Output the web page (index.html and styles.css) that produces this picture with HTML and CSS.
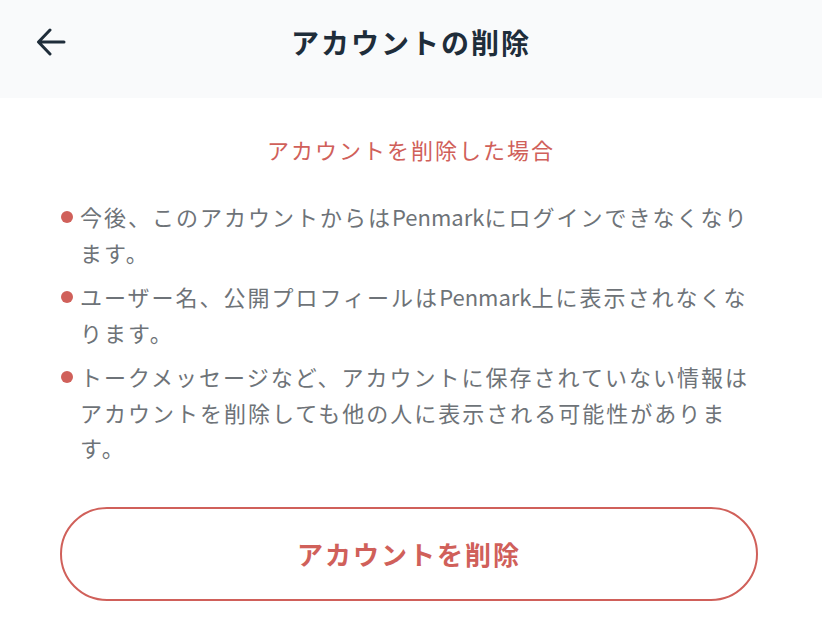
FILE: index.html
```html
<!DOCTYPE html>
<html lang="ja">
<head>
<meta charset="utf-8">
<link rel="stylesheet" href="styles.css">
</head>
<body>
<header class="header">
  <button class="back" aria-label="戻る">
    <svg width="30" height="28" viewBox="0 0 30 28"><path d="M28 14H3M14 2L2.5 14L14 26" fill="none" stroke="#1f2d3a" stroke-width="3" stroke-linecap="round" stroke-linejoin="round"/></svg>
  </button>
  <h1 class="title">アカウントの削除</h1>
</header>
<main class="content">
  <h2 class="subtitle">アカウントを削除した場合</h2>
  <ul class="list">
    <li class="item">今後、このアカウントからは<span class="latin">Penmark</span>にログインできなくなります。</li>
    <li class="item">ユーザー名、公開プロフィールは<span class="latin">Penmark</span>上に表示されなくなります。</li>
    <li class="item">トークメッセージなど、アカウントに保存されていない情報はアカウントを削除しても他の人に表示される可能性があります。</li>
  </ul>
  <button class="delete">アカウントを削除</button>
</main>
</body>
</html>
```
FILE: styles.css
```css
* { box-sizing: border-box; }
html, body { margin: 0; padding: 0; background: #ffffff; }
body {
  font-family: "Noto Sans CJK JP", "Noto Sans", sans-serif;
  width: 822px;
  height: 621px;
  overflow: hidden;
}
.header {
  height: 98px;
  background: #f9fafb;
  display: flex;
  align-items: flex-start;
  justify-content: center;
  position: relative;
}
.back {
  position: absolute;
  left: 36px;
  top: 28px;
  border: 0;
  background: none;
  padding: 0;
  display: flex;
}
.title {
  margin: 22px 0 0;
  font-size: 28px;
  line-height: 40px;
  font-weight: 700;
  color: #1f2d3a;
  letter-spacing: 2px;
}
.content {
  padding: 31px 60px 0 60px;
  display: flex;
  flex-direction: column;
}
.subtitle {
  margin: 0;
  text-align: center;
  font-size: 22px;
  line-height: 40px;
  font-weight: 400;
  color: #d0605a;
  letter-spacing: 2px;
}
.list {
  list-style: none;
  margin: 30px 0 0;
  padding: 0;
  width: 702px;
  display: flex;
  flex-direction: column;
  gap: 9px;
}
.item {
  position: relative;
  padding-left: 20px;
  font-size: 22px;
  line-height: 35.5px;
  color: #6e7378;
  letter-spacing: 2px;
}
.latin { letter-spacing: 0; }
.item::before {
  content: "";
  position: absolute;
  left: 1px;
  top: 11.5px;
  width: 12px;
  height: 12px;
  border-radius: 50%;
  background: #d0605a;
}
.delete {
  margin-top: 41px;
  width: 698px;
  height: 94px;
  border: 2px solid #d0605a;
  border-radius: 47px;
  background: #fff;
  color: #d0605a;
  font-family: inherit;
  font-size: 26px;
  font-weight: 700;
  letter-spacing: 2px;
}
```
